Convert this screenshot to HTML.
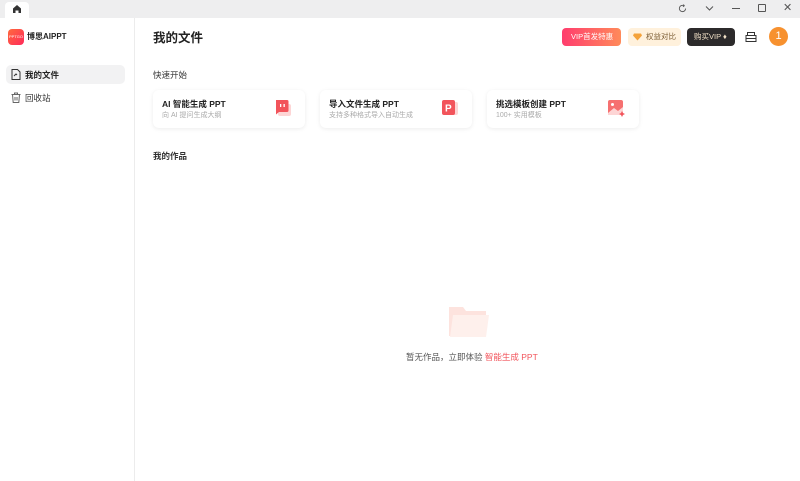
<!DOCTYPE html><html><head><meta charset="utf-8"><style>
*{margin:0;padding:0;box-sizing:border-box}
body{width:800px;height:481px;background:#fff;font-family:"Liberation Sans","Noto Sans CJK SC",sans-serif;position:relative;overflow:hidden;color:#222}
.tb{position:absolute;left:0;top:0;width:800px;height:18px;background:#eeeeef}
.tab{position:absolute;left:5px;top:2px;width:24px;height:16px;background:#fff;border-radius:4px 4px 0 0}
.side{position:absolute;left:0;top:18px;width:135px;height:463px;border-right:1px solid #ececec}
.abs{position:absolute}
.card{position:absolute;top:90px;width:152px;height:38px;background:#fff;border-radius:6px;box-shadow:0 1px 4px rgba(0,0,0,.08)}
.card .t{position:absolute;left:9px;top:8px;font-size:8.5px;font-weight:bold;color:#222}
.card .s{position:absolute;left:9px;top:20px;font-size:7px;color:#aaa}
.card svg{position:absolute;right:13px;top:9px}
</style></head><body>
<div class="tb"><div class="tab"></div>
<svg class="abs" style="left:12px;top:4px" width="10" height="10" viewBox="0 0 10 10"><path d="M1 4.5L5 1l4 3.5V9H6.5V6.5h-3V9H1z" fill="#333"/></svg>
<svg class="abs" style="left:678px;top:4px" width="9" height="9" viewBox="0 0 10 10" fill="none" stroke="#555" stroke-width="1"><path d="M8.5 5A3.5 3.5 0 1 1 6.5 1.8M6 0.5l1 1.5-1.5 1"/></svg>
<svg class="abs" style="left:705px;top:5px" width="9" height="7" viewBox="0 0 9 7" fill="none" stroke="#555"><path d="M1 1.5l3.5 3.5 3.5-3.5"/></svg>
<div class="abs" style="left:732px;top:8px;width:8px;height:1px;background:#555"></div>
<div class="abs" style="left:758px;top:4px;width:8px;height:8px;border:1px solid #555;border-radius:1px"></div>
<div class="abs" style="left:783px;top:1px;font-size:11px;color:#555">✕</div>
</div>
<div class="side">
<div class="abs" style="left:8px;top:11px;width:16px;height:16px;border-radius:4px;background:linear-gradient(135deg,#ff6a3d,#ff2a5a)"><span style="position:absolute;left:1px;top:5px;font-size:4px;color:#fff">PPTGO</span></div>
<div class="abs" style="left:27px;top:13px;font-size:8px;font-weight:bold;color:#222">博思AIPPT</div>
<div class="abs" style="left:6px;top:47px;width:119px;height:19px;background:#f2f2f3;border-radius:5px"></div>
<svg class="abs" style="left:11px;top:51px" width="10" height="11" viewBox="0 0 10 11" fill="none" stroke="#333"><path d="M1 .5h5.5L9 3v7.5H1z M3 7l2-2 1 1"/></svg>
<div class="abs" style="left:25px;top:51px;font-size:8.5px;font-weight:bold">我的文件</div>
<svg class="abs" style="left:11px;top:74px" width="10" height="11" viewBox="0 0 10 11" fill="none" stroke="#666"><path d="M.5 2.5h9M3.5 2.5V1h3v1.5M1.5 2.5l.7 8h5.6l.7-8M4 5v3.5M6 5v3.5"/></svg>
<div class="abs" style="left:25px;top:74px;font-size:8.5px;color:#333">回收站</div>
</div>
<div class="abs" style="left:153px;top:27px;font-size:12.5px;font-weight:bold">我的文件</div>
<div class="abs" style="left:562px;top:28px;width:59px;height:18px;border-radius:4px;background:linear-gradient(90deg,#ff3d6e,#ff8a5a);color:#fff;font-size:7.5px;line-height:18px;padding-left:9px">VIP首发特惠</div>
<div class="abs" style="left:628px;top:28px;width:53px;height:18px;border-radius:4px;background:#fff1dc;color:#7a5a30;font-size:7.5px;line-height:18px;padding-left:18px">权益对比</div>
<svg class="abs" style="left:633px;top:33px" width="9" height="8" viewBox="0 0 9 8"><path d="M1 .5h7l1 2-4.5 5-4.5-5z" fill="#f4a23a"/></svg>
<div class="abs" style="left:687px;top:28px;width:48px;height:18px;border-radius:4px;background:#2c2a2b;color:#f3e2c8;font-size:7.5px;line-height:18px;padding-left:7px">购买VIP ♦</div>
<svg class="abs" style="left:745px;top:31px" width="12" height="12" viewBox="0 0 12 12" fill="none" stroke="#333"><path d="M2.5 4V1.5h7V4M1 4.5h10v6H1zM1 7.5h10"/></svg>
<div class="abs" style="left:769px;top:27px;width:19px;height:19px;border-radius:50%;background:#f7912f;color:#fff;font-size:11px;text-align:center;line-height:19px">1</div>
<div class="abs" style="left:153px;top:69px;font-size:8.5px;color:#333">快速开始</div>
<div class="card" style="left:153px"><div class="t">AI 智能生成 PPT</div><div class="s">向 AI 提问生成大纲</div>
<svg width="18" height="18" viewBox="0 0 18 18"><rect x="4" y="5" width="13" height="12" rx="2" fill="#fdd5d5"/><path d="M2 1h11a1.5 1.5 0 0 1 1.5 1.5v9A1.5 1.5 0 0 1 13 13H5l-3 2.5z" fill="#f2545b"/><rect x="6" y="5" width="1.3" height="3" fill="#fff"/><rect x="9.5" y="5" width="1.3" height="3" fill="#fff"/></svg></div>
<div class="card" style="left:320px"><div class="t">导入文件生成 PPT</div><div class="s">支持多种格式导入自动生成</div>
<svg width="18" height="18" viewBox="0 0 18 18"><rect x="5" y="3" width="12" height="13" rx="2" fill="#fdd5d5"/><rect x="1" y="1" width="13" height="15" rx="2" fill="#f2545b"/><text x="4" y="12.5" font-size="10" font-weight="bold" fill="#fff" font-family="Liberation Sans">P</text></svg></div>
<div class="card" style="left:487px"><div class="t">挑选模板创建 PPT</div><div class="s">100+ 实用模板</div>
<svg width="19" height="19" viewBox="0 0 19 19"><rect x="1" y="1" width="15" height="15" rx="2" fill="#f67070"/><path d="M1 14l6-5 4 3 5-4v8H1z" fill="#fdd5d5"/><circle cx="5.5" cy="5.5" r="1.5" fill="#fff"/><path d="M15 12l1 2 2 1-2 1-1 2-1-2-2-1 2-1z" fill="#f2545b"/></svg></div>
<div class="abs" style="left:153px;top:150px;font-size:8.5px;font-weight:bold;color:#333">我的作品</div>
<svg class="abs" style="left:447px;top:304px" width="44" height="34" viewBox="0 0 44 34"><path d="M2 3h14l3 4h20v25H2z" fill="#fde3de"/><path d="M6 11h36l-3 22H3z" fill="#fef0ec"/></svg>
<div class="abs" style="left:406px;top:351px;font-size:8.5px;color:#555">暂无作品，立即体验 <span style="color:#f2545b">智能生成 PPT</span></div>
</body></html>
